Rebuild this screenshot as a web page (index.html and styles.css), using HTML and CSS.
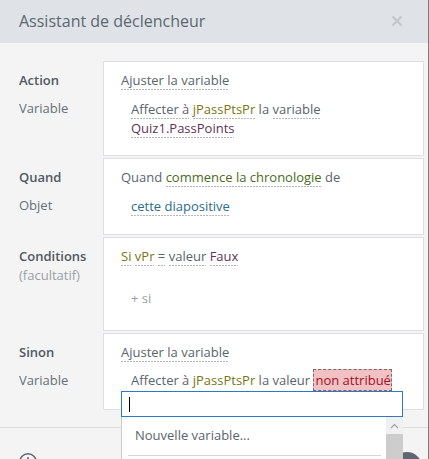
FILE: index.html
```html
<!DOCTYPE html>
<html lang="fr">
<head>
<meta charset="utf-8">
<link rel="stylesheet" href="styles.css">
</head>
<body>
<div class="dialog">
  <div class="header">
    <span class="title">Assistant de déclencheur</span>
    <svg class="close" width="12" height="12" viewBox="0 0 12 12"><path d="M1.5 1.5L10.5 10.5M10.5 1.5L1.5 10.5" stroke="#c3c7cb" stroke-width="2.4" fill="none"/></svg>
  </div>
  <div class="body">
    <div class="row">
      <div class="labels"><div class="lbl-main">Action</div><div class="lbl-sub">Variable</div></div>
      <div class="card card-action">
        <div class="line first"><span class="u">Ajuster la variable</span></div>
        <div class="line indent"><span class="u">Affecter à</span> <span class="u olive">jPassPtsPr</span> la <span class="u">variable</span></div>
        <div class="line indent"><span class="u purple">Quiz1.PassPoints</span></div>
      </div>
    </div>
    <div class="row">
      <div class="labels"><div class="lbl-main">Quand</div><div class="lbl-sub">Objet</div></div>
      <div class="card card-when">
        <div class="line first">Quand <span class="u green">commence la chronologie</span> de</div>
        <div class="line indent"><span class="u teal">cette diapositive</span></div>
      </div>
    </div>
    <div class="row">
      <div class="labels"><div class="lbl-main">Conditions</div><div class="lbl-opt">(facultatif)</div></div>
      <div class="card card-cond">
        <div class="line"><span class="u olive">Si</span> <span class="u olive">vPr</span> <span class="u">=</span> <span class="u">valeur</span> <span class="u purple">Faux</span></div>
        <div class="line indent plus">+ si</div>
      </div>
    </div>
    <div class="row">
      <div class="labels"><div class="lbl-main">Sinon</div><div class="lbl-sub">Variable</div></div>
      <div class="card card-else">
        <div class="line first-else"><span class="u">Ajuster la variable</span></div>
        <div class="line indent">Affecter à <span class="olive">jPassPtsPr</span> la valeur <span class="unset">non attribué</span></div>
      </div>
    </div>
  </div>
  <div class="footer">
    <svg class="info" width="20" height="20" viewBox="0 0 20 20"><circle cx="10" cy="10" r="8.3" stroke="#5b646b" stroke-width="1.4" fill="none"/><circle cx="10" cy="6" r="1" fill="#5b646b"/></svg>
    <div class="round-btn"></div>
  </div>
  <div class="dropdown">
    <div class="input"><span class="caret"></span></div>
    <div class="list">
      <div class="items">
        <div class="item">Nouvelle variable...</div>
        <div class="sep"></div>
      </div>
      <div class="scrollbar">
        <div class="sb-up"><svg width="9" height="6" viewBox="0 0 9 6"><path d="M1 5L4.5 1.5L8 5" stroke="#9ea3a7" stroke-width="1.2" fill="none"/></svg></div>
        <div class="sb-thumb"></div>
      </div>
    </div>
  </div>
</div>
</body>
</html>
```
FILE: styles.css
```css
html, body {
  margin: 0;
  padding: 0;
}
body {
  width: 429px;
  height: 459px;
  overflow: hidden;
  background: #f4f4f4;
  font-family: "Open Sans", "Noto Sans", sans-serif;
  font-size: 13px;
  color: #5a646c;
}
.dialog {
  position: relative;
  width: 428px;
  height: 459px;
  overflow: hidden;
  border-right: 1px solid #7d7d7d;
  background: #f4f4f4;
}
.header {
  height: 43px;
  background: #dfe3e7;
  display: flex;
  align-items: center;
  justify-content: space-between;
  padding: 0 25px 0 19px;
}
.title {
  font-size: 16px;
  color: #5c676f;
  margin-top: -1px;
}
.close {
  margin-top: -2px;
}
.body {
  padding-top: 18px;
  display: flex;
  flex-direction: column;
  gap: 2px;
}
.row {
  display: flex;
}
.labels {
  width: 84px;
  padding-left: 19px;
  padding-top: 10px;
  line-height: 19px;
}
.lbl-main {
  font-weight: 600;
  color: #4f5961;
  margin-bottom: 9px;
}
.lbl-sub {
  color: #66707a;
}
.lbl-opt {
  color: #9aa0a5;
  margin-top: -9px;
}
.card {
  width: 302px;
  background: #fff;
  border: 1px solid #dde0e3;
  padding: 9px 0 0 17px;
  line-height: 19px;
}
.card-action { height: 84px; }
.card-when { height: 66px; }
.card-cond { height: 83px; }
.card-else { height: 66px; }
.line.first { margin-bottom: 10px; }
.first-else { margin-bottom: 9px; }
.indent { padding-left: 10px; }
.plus {
  margin-top: 23px;
  color: #9a9fa3;
}
.u {
  padding-bottom: 1px;
  background-image: repeating-linear-gradient(to right, #b4b8bb 0 2px, transparent 2px 3px);
  background-size: 100% 1px;
  background-repeat: no-repeat;
  background-position: 0 100%;
}
.olive { color: #7b7512; }
.purple { color: #5d3358; }
.green { color: #4d6a1e; }
.teal { color: #2b6d8a; }
.unset {
  color: #a0121f;
  background: #f3c1c4;
  border: 1px dashed #7a6a6a;
  padding: 1px 0 1px 1px;
}
.footer {
  position: absolute;
  left: 0;
  right: 0;
  top: 427px;
  height: 31px;
  overflow: hidden;
  border-top: 1px solid #dcdcdc;
}
.info {
  position: absolute;
  left: 18px;
  top: 24px;
}
.round-btn {
  position: absolute;
  left: 392px;
  top: 24px;
  width: 30px;
  height: 30px;
  border-radius: 50%;
  background: #5e6870;
}
.dropdown {
  position: absolute;
  left: 121px;
  top: 391px;
  width: 282px;
}
.input {
  height: 24px;
  border: 1px solid #2a7bc6;
  background: #fff;
  position: relative;
}
.caret {
  position: absolute;
  left: 7px;
  top: 5px;
  width: 1px;
  height: 15px;
  background: #000;
}
.list {
  height: 42px;
  background: #fff;
  border-left: 1px solid #cbcbcb;
  display: flex;
}
.items {
  flex: 1;
  padding-left: 6px;
}
.item {
  padding: 9px 0 0 7px;
  height: 29px;
  line-height: 19px;
  color: #5a646c;
}
.sep {
  width: 253px;
  height: 1px;
  background: #d6d6d6;
}
.scrollbar {
  width: 17px;
  display: flex;
  flex-direction: column;
}
.sb-up {
  height: 17px;
  background: #f0f0f0;
  display: flex;
  align-items: center;
  justify-content: center;
}
.sb-thumb {
  flex: 1;
  background: #cdcdcd;
}
```
